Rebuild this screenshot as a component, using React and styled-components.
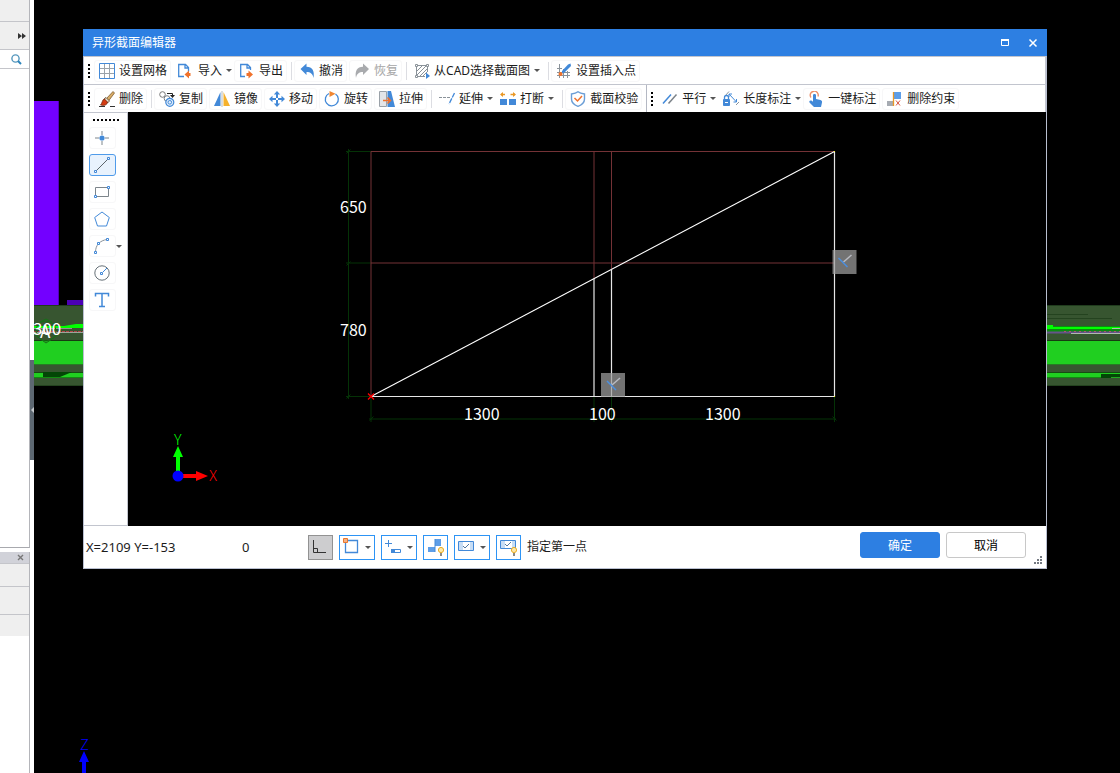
import { useState } from "react";
import styled, { createGlobalStyle, css } from "styled-components";

const GlobalStyle = createGlobalStyle`
  * {
    box-sizing: border-box;
  }

  body {
    margin: 0;
    background: #000;
    color: #1c1c1c;
    font-family: "Noto Sans", "Noto Sans CJK SC", sans-serif;
    font-size: 12px;
    line-height: 16px;
  }

  button {
    margin: 0;
    color: inherit;
    font: inherit;
  }

  svg {
    display: block;
    flex: none;
  }
`;

const Page = styled.div`
  display: flex;
  min-height: 100vh;
`;

/* ---------- docked side panels ---------- */

const Sidebar = styled.aside`
  display: flex;
  flex: none;
  flex-direction: column;
  gap: 4px;
  width: 30px;
  background: #fff;
`;

const DockPanel = styled.section`
  flex: ${({ $grow }) => ($grow ? "1" : "0 0 221px")};
  border-right: 1px solid #b4b5ba;
  border-bottom: ${({ $grow }) => ($grow ? "1px solid #a8a9ae" : "none")};
  background: #fff;
`;

const DockRow = styled.div`
  display: flex;
  align-items: center;
  justify-content: flex-end;
  height: ${({ $height }) => $height}px;
  padding-right: ${({ $pad }) => $pad || 0}px;
  border-bottom: ${({ $open }) => ($open ? "none" : "1px solid #c4c5ca")};
  background: ${({ $color }) => $color || "#efefef"};
`;

const PlainButton = styled.button`
  display: flex;
  padding: 0;
  border: 0;
  background: none;
`;

const Splitter = styled.div`
  flex: none;
  width: 4px;
  padding-top: 360px;
  background: #fff;
`;

const SplitterHandle = styled.button`
  display: flex;
  align-items: center;
  width: 4px;
  height: 100px;
  padding: 0;
  border: 0;
  background: #5d6872;
`;

/* ---------- model view behind the dialog ---------- */

const Viewport = styled.main`
  position: relative;
  flex: 1;
  min-width: 0;
  padding: 29px 73px 0 49px;
  overflow: hidden;
  background: #000;
`;

const Scene = styled.svg`
  position: absolute;
  inset: 0;
  width: 100%;
  height: 100%;
`;

const cadFont = css`
  font-family: "Noto Sans CJK SC", sans-serif;
`;

const SceneText = styled.text`
  ${cadFont}
  font-size: ${({ $size }) => $size || 16}px;
  fill: #fff;
`;

const AxisText = styled.text`
  ${cadFont}
  font-size: 15px;
  font-weight: 300;
  fill: ${({ $color }) => $color};
`;

/* ---------- dialog ---------- */

const Dialog = styled.section`
  position: relative;
  border: 1px solid #b9bfd0;
  border-top: 0;
  background: #fff;
`;

const TitleBar = styled.header`
  display: flex;
  align-items: center;
  height: 27px;
  margin: 0 -1px;
  padding: 0 9px;
  background: #2d7fe2;
  color: #fff;
`;

const Title = styled.h1`
  flex: 1;
  margin: 0;
  font-size: 12px;
  font-weight: 400;
`;

const WindowButtons = styled.div`
  display: flex;
  gap: 18px;
`;

const ToolbarRow = styled.div`
  display: flex;
  height: 28px;
  border-top: 1px solid #c2c5ce;
  border-right: 1px solid #c2c5ce;
`;

const Toolbar = styled.div`
  display: flex;
  align-items: center;
  gap: 2px;
  padding: 0 4px;

  & + & {
    border-left: 1px solid #b4b8c3;
  }
`;

const Grip = styled.span`
  width: ${({ $wide }) => ($wide ? "26px" : "2px")};
  height: ${({ $wide }) => ($wide ? "2px" : "14px")};
  margin-right: 2px;
  background: repeating-linear-gradient(
    ${({ $wide }) => ($wide ? "to right" : "to bottom")},
    #000 0 2px,
    transparent 2px 4px
  );
`;

const ToolButton = styled.button`
  display: flex;
  align-items: center;
  gap: 4px;
  height: 22px;
  padding: 0 ${({ $drop }) => ($drop ? 0 : 3)}px 0 4px;
  border: 1px solid ${({ $drop }) => ($drop ? "transparent" : "#f7f7f8")};
  border-right-width: ${({ $drop }) => ($drop ? 0 : 1)}px;
  border-radius: 3px;
  background: #fff;
  white-space: nowrap;

  &:disabled {
    color: #a6a6a6;
  }
`;

const Caret = styled.span`
  border: 3px solid transparent;
  border-top-color: #555;
  border-bottom: 0;
`;

const Separator = styled.span`
  width: 1px;
  height: 18px;
  margin-left: ${({ $afterDrop }) => ($afterDrop ? 6 : 2)}px;
  background: #dcdde2;
`;

const Workspace = styled.div`
  display: flex;
`;

const Palette = styled.div`
  display: flex;
  flex: none;
  flex-direction: column;
  width: 44px;
  padding: 6px 0 0 5px;
  border: solid #c2c5ce;
  border-width: 1px 1px 1px 0;
`;

const PaletteGrip = styled(Grip)`
  margin: 0 0 6px 4px;
`;

const PaletteRow = styled.div`
  display: flex;
  align-items: center;
  height: 22px;
  margin-bottom: 5px;
`;

const PaletteButton = styled.button`
  display: flex;
  align-items: center;
  justify-content: center;
  width: 27px;
  height: 22px;
  padding: 0 2px 0 0;
  border: 1px solid ${({ $active }) => ($active ? "#4f9bea" : "#f7f7f8")};
  border-radius: 3px;
  background: ${({ $active }) => ($active ? "#e8f2fd" : "#fff")};
`;

const Canvas = styled.div`
  flex: 1;
  min-width: 0;
  height: 414px;
  background: #000;
`;

const CanvasSvg = styled.svg`
  width: 100%;
  height: 100%;
`;

const StatusBar = styled.footer`
  display: flex;
  align-items: center;
  height: 42px;
  padding: 0 20px 0 2px;
`;

const Coords = styled.output`
  width: 156px;
  font-size: 13px;
`;

const Angle = styled.output`
  width: 66px;
  font-size: 13px;
`;

const SnapTools = styled.div`
  display: flex;
  flex: 1;
  align-items: center;
  gap: 6px;
`;

const SnapButton = styled.button`
  display: flex;
  align-items: center;
  justify-content: space-between;
  width: ${({ $drop }) => ($drop ? 36 : 25)}px;
  height: 25px;
  padding: 0 ${({ $drop }) => ($drop ? 3 : 2)}px 0 3px;
  border: 1px solid ${({ $pressed }) => ($pressed ? "#929292" : "#2d94f5")};
  background: ${({ $pressed }) => ($pressed ? "#cdcdcf" : "#fff")};
`;

const Actions = styled.div`
  display: flex;
  align-self: flex-start;
  gap: 6px;
  padding-top: 6px;
`;

const ActionButton = styled.button`
  width: 80px;
  height: 26px;
  padding: 1px 0 0;
  border: 1px solid ${({ $primary }) => ($primary ? "#2d7fe2" : "#c8c8c8")};
  border-radius: 3px;
  background: ${({ $primary }) => ($primary ? "#2d7fe2" : "#fff")};
  color: ${({ $primary }) => ($primary ? "#fff" : "#000")};
`;

const ResizeGrip = styled.svg`
  position: absolute;
  right: 4px;
  bottom: 4px;
`;

/* ---------- icons ---------- */

const BLUE = "#4289d8";
const GRAY = "#8a9299";

const icons = {
  grid: (
    <g fill="none">
      <path d="M1 5.5h14M1 10.5h14M5.5 1v14M10.5 1v14" stroke="#9aa2a9" />
      <path d="M.5.5h15v15H.5z" stroke={BLUE} />
    </g>
  ),
  import: (
    <>
      <path d="M6 13.5H.7v-12h6.8l3 3v4M7 1.5V5h3.5" fill="none" stroke={BLUE} strokeWidth="1.3" />
      <path d="M6.5 11.5l4.5-4V10h1.500v3H11v2.500z" fill="#f0722c" />
    </>
  ),
  export: (
    <>
      <path d="M6 13.5H1.700v-12h6.800l3 3V7M8 1.500V5h3.500" fill="none" stroke={BLUE} strokeWidth="1.3" />
      <path d="M14 11.500l-4.500-4V10h-2v3h2v2.500z" fill="#f0722c" />
    </>
  ),
  undo: (
    <path d="M1.500 6l6-5.500v3.200c6 0 8.300 4.300 7 11.300-.7-4.200-3-6-7-6v3z" fill={BLUE} />
  ),
  redo: (
    <path d="M15 6L9 .5v3.200c-6 0-8.300 4.300-7 11.300.7-4.200 3-6 7-6v3z" fill="#a9abae" />
  ),
  cad: (
    <g fill="none" stroke={GRAY}>
      <path d="M2 2.500h12M2 13.500h9M2.500 3v10M13.500 3v6" />
      <path d="M3 8l5-5M3 12l9-9M6 13l7-7M9 13l4-4" />
      <path d="M1.500 1.500h2v2h-2zM12.500 1.500h2v2h-2zM1.500 12.500h2v2h-2z" fill="#fff" />
      <path d="M12 9.500l4 3.500-4 3z" fill={BLUE} stroke="none" />
    </g>
  ),
  insert: (
    <>
      <path d="M3.500 1v14M7.500 6v9M1 5.500h5M1 12.500h13M1 9.500h13M11.500 8v7" fill="none" stroke={GRAY} />
      <path d="M6 8l6-6.500 2.500-1 .5 2.500-6.500 6.500-2.500 1z" fill={BLUE} />
      <circle cx="4.500" cy="11" r="2" fill="#f0722c" />
    </>
  ),
  brush: (
    <>
      <path d="M0 15.500h6M11 15.500h5" stroke="#333" />
      <path d="M7 8l7-7.500 1.500 1.500L9.500 10z" fill="#d9ad68" stroke="#6d4a1e" strokeWidth=".7" />
      <path d="M5 8l2-1.500L10.500 10l-2 2z" fill="#eee4cf" stroke="#4d3820" strokeWidth=".8" />
      <path d="M5.500 8C3 8.500 3.500 12 1.500 14c3.500 1 7 0 7-3z" fill="#d43b11" stroke="#62240f" strokeWidth=".7" />
    </>
  ),
  copy: (
    <g fill="none">
      <circle cx="3.500" cy="3.500" r="2.800" stroke="#777" />
      <path d="M8 2.500h5.500V5" stroke="#222" />
      <path d="M11 4h5l-2.500 3z" fill="#222" />
      <circle cx="8" cy="7.500" r="2.800" stroke="#798087" />
      <circle cx="10.800" cy="11.300" r="4" stroke={BLUE} fill="#e3effb" strokeWidth="1.200" />
      <circle cx="10.800" cy="11.300" r="1.800" stroke={BLUE} />
    </g>
  ),
  mirror: (
    <>
      <path d="M6.500 1v14H0z" fill={BLUE} />
      <path d="M9.500 1v14H16z" fill="#f5b12d" />
      <path d="M8 0v16" stroke="#b5bbc1" />
    </>
  ),
  move: (
    <>
      <path d="M8 0l3.200 3.500H4.800zM8 16l3.200-3.500H4.800zM0 8l3.500-3.200v6.400zM16 8l-3.500-3.200v6.400z" fill={BLUE} />
      <path d="M8 3v4M8 9v4M3 8h4M9 8h4" stroke={BLUE} strokeWidth="2" />
    </>
  ),
  rotate: (
    <>
      <path d="M5 2.500A6.500 6.500 0 1 0 11.500 3" fill="none" stroke={BLUE} strokeWidth="1.300" />
      <path d="M5.500 0l6 2.700-6 3.300z" fill="#f08732" />
    </>
  ),
  stretch: (
    <>
      <path d="M.5.5h7v15h-7z" fill="#e3e5e8" stroke="#9aa1a8" />
      <path d="M8.500 0H12l4 16H8.500z" fill={BLUE} />
      <path d="M4 9.500h7M8.500 6.500l3 3-3 3" fill="none" stroke="#f0722c" strokeWidth="1.500" />
    </>
  ),
  extend: (
    <>
      <path d="M0 6.500h11" stroke={GRAY} strokeDasharray="3 1" />
      <path d="M15.500 2L10 13" stroke={BLUE} strokeWidth="1.300" strokeDasharray="5 1" />
    </>
  ),
  breakTool: (
    <>
      <path d="M0 8h7v6H0zM9 8h7v6H9z" fill={BLUE} />
      <path d="M1 3.500h4M10.500 3.500H15" stroke="#e99826" strokeWidth="1.300" />
      <path d="M3 1v5L0 3.500zM13 1v5l3-2.500z" fill="#e99826" />
    </>
  ),
  check: (
    <g fill="none">
      <path d="M8 .8c2 1.700 4 2 6.500 2.200v5c0 4-3 6-6.500 7.300C4.500 14 1.500 12 1.500 8V3C4 2.800 6 2.500 8 .8z" stroke="#6b9ed6" strokeWidth="1.400" />
      <path d="M4.500 7l3 3 4.500-5" stroke="#f0722c" strokeWidth="1.500" />
    </g>
  ),
  parallel: (
    <g fill="none" strokeWidth="1.500">
      <path d="M1 12.500l8-9" stroke={BLUE} />
      <path d="M6.500 12.500l8-9" stroke="#7b8288" />
    </g>
  ),
  length: (
    <g fill="none">
      <path d="M2 5l4-4.500M13 14l3-3" stroke={GRAY} />
      <path d="M6 3l7.500 8M6 6V3h3M10.500 11h3V8" stroke={BLUE} />
      <path d="M.5 8.500h6v6h-6z" fill={BLUE} stroke={BLUE} />
      <path d="M1.500 8V6.500a2 2 0 0 1 4 0V8" stroke={BLUE} strokeWidth="1.300" />
      <path d="M2 11.500h3" stroke="#fff" />
    </g>
  ),
  touch: (
    <>
      <path d="M3 6.500A4 4 0 1 1 10 5.500" fill="none" stroke="#ee9068" strokeWidth="1.400" />
      <path d="M5 4c0-1.500 3-1.500 3 0v4l4.500 1c1.300.4 1.800 1.200 1.500 2.500L13 16H6l-4.500-4.500C.7 9.700 2.500 8.800 3.800 9.800L5 10.800z" fill={BLUE} />
    </>
  ),
  unlink: (
    <>
      <path d="M0 10h6v5H0z" fill="#a6abb2" />
      <path d="M7 1h7v7H7z" fill="#5d9ee8" />
      <path d="M6.500 1v14" stroke="#e99826" strokeWidth="1.300" />
      <path d="M9 9.500l4 5M13 9.500l-4 5" stroke="#d85540" />
    </>
  ),
  point: (
    <>
      <path d="M8 1v4M8 11v4M1 8h4M11 8h4" stroke="#7d858b" />
      <circle cx="8" cy="8" r="2.600" fill={BLUE} />
    </>
  ),
  line: (
    <>
      <path d="M2 14L14 2" stroke="#5c646b" />
      <path d="M.5 13.500h2v2h-2zM13.500.5h2v2h-2z" fill="#fff" stroke={BLUE} />
    </>
  ),
  rect: (
    <>
      <path d="M1.500 3.500h13v9h-13z" fill="none" stroke="#7d858b" />
      <path d="M.5 11.500h2v2h-2zM13.500 2.500h2v2h-2z" fill="#fff" stroke={BLUE} />
    </>
  ),
  polygon: <path d="M8 1l7.300 5.500-2.800 8.500h-9L.7 6.500z" fill="none" stroke={BLUE} />,
  arc: (
    <>
      <path d="M1.500 14C1.500 7 6 2.500 13 1.500" fill="none" stroke="#8a9299" />
      <path d="M.5 13.500h2v2h-2zM3.500 4.500h2v2h-2zM12.500.5h2v2h-2z" fill="#fff" stroke={BLUE} />
    </>
  ),
  circle: (
    <>
      <circle cx="8" cy="8" r="7.200" fill="none" stroke="#667077" />
      <path d="M9 7l4-4" stroke={BLUE} />
      <path d="M6.500 7.500h2v2h-2z" fill="#fff" stroke={BLUE} />
    </>
  ),
  textTool: (
    <path d="M1.500 4.500v-3h13v3M8 1.500v13M5 14.500h6" fill="none" stroke={BLUE} strokeWidth="1.500" />
  ),
};

const Icon = ({ name }) => (
  <svg width="16" height="16" viewBox="0 0 16 16" aria-hidden="true">
    {icons[name]}
  </svg>
);

const bulb = (
  <>
    <circle cx="14" cy="12" r="2.600" fill="#ffe9a8" stroke="#e9ad24" />
    <path d="M13 15h2v3h-2z" fill="#8c8a84" />
  </>
);

const snapIcons = {
  ortho: <path d="M1.500 2v12.500H14M1.500 10.500h4v4" fill="none" stroke="#333" />,
  corner: (
    <>
      <path d="M2.500 2.500h12v12h-12z" fill="none" stroke={BLUE} strokeWidth="1.300" />
      <path d="M.5.5h4v4h-4z" fill="#f6b183" stroke="#e8772e" />
    </>
  ),
  input: (
    <>
      <path d="M3.500 2v7M0 5.500h7" stroke={BLUE} />
      <path d="M6.500 11.500h9v3h-9z" fill="#fff" stroke={BLUE} />
      <path d="M6 11h4v4H6z" fill={BLUE} />
    </>
  ),
  blocks: (
    <>
      <path d="M8 1h6v7H8zM1 9h7v5H1z" fill="#5d9ee8" />
      <path d="M8 1v13" stroke={BLUE} />
      {bulb}
    </>
  ),
  constraint: (
    <>
      <path d="M.5 3.500h15v9H.5z" fill="#fff" stroke={BLUE} />
      <path d="M1 4h4v8H1zM12 4h3v8h-3z" fill="#c7ddf5" />
      <path d="M5 8l2 2 4-4" fill="none" stroke="#52779f" />
    </>
  ),
  constraintLight: (
    <>
      <path d="M.5 2.500h15v8H.5z" fill="#fff" stroke={BLUE} />
      <path d="M1 3h4v7H1zM12 3h3v7h-3z" fill="#c7ddf5" />
      <path d="M5 6l2 2 4-4" fill="none" stroke="#52779f" />
      {bulb}
    </>
  ),
};

/* ---------- data ---------- */

const mainTools = [
  { icon: "grid", label: "设置网格" },
  { icon: "import", label: "导入", drop: true },
  { icon: "export", label: "导出" },
  { separator: true },
  { icon: "undo", label: "撤消" },
  { icon: "redo", label: "恢复", disabled: true },
  { separator: true },
  { icon: "cad", label: "从CAD选择截面图", drop: true },
  { separator: true },
  { icon: "insert", label: "设置插入点" },
];

const editTools = [
  { icon: "brush", label: "删除" },
  { separator: true },
  { icon: "copy", label: "复制" },
  { icon: "mirror", label: "镜像" },
  { icon: "move", label: "移动" },
  { icon: "rotate", label: "旋转" },
  { icon: "stretch", label: "拉伸" },
  { separator: true },
  { icon: "extend", label: "延伸", drop: true },
  { icon: "breakTool", label: "打断", drop: true },
  { separator: true },
  { icon: "check", label: "截面校验" },
];

const constraintTools = [
  { icon: "parallel", label: "平行", drop: true },
  { icon: "length", label: "长度标注", drop: true },
  { icon: "touch", label: "一键标注" },
  { icon: "unlink", label: "删除约束" },
];

const drawTools = [
  { icon: "point", label: "点" },
  { icon: "line", label: "直线" },
  { icon: "rect", label: "矩形" },
  { icon: "polygon", label: "多边形" },
  { icon: "arc", label: "弧", drop: true },
  { icon: "circle", label: "圆" },
  { icon: "textTool", label: "文字" },
];

const snapTools = [
  { icon: "ortho", label: "正交", pressed: true },
  { icon: "corner", label: "对象捕捉", drop: true },
  { icon: "input", label: "动态输入", drop: true },
  { icon: "blocks", label: "显示图块" },
  { icon: "constraint", label: "约束", drop: true },
  { icon: "constraintLight", label: "显示约束" },
];

const ToolGroup = ({ label, tools }) => (
  <Toolbar role="toolbar" aria-label={label}>
    <Grip />
    {tools.map((tool, index) =>
      tool.separator ? (
        <Separator key={index} $afterDrop={tools[index - 1].drop} />
      ) : (
        <ToolButton key={index} type="button" $drop={tool.drop} disabled={tool.disabled}>
          <Icon name={tool.icon} />
          {tool.label}
          {tool.drop && <Caret />}
        </ToolButton>
      )
    )}
  </Toolbar>
);

const ConstraintMark = ({ x, y }) => (
  <g transform={`translate(${x} ${y})`}>
    <path d="M0 0h24v24H0z" fill="#a0a0a0" fillOpacity=".72" />
    <path d="M11 12l8-7" stroke="#b9bbc2" strokeWidth="1.500" />
    <path d="M6 8l9 9" stroke="#4b8fe0" strokeWidth="1.500" />
  </g>
);

const SectionDrawing = () => (
  <CanvasSvg role="img" aria-label="截面图">
    <g transform="translate(-128 -112)" fill="none">
      <path
        d="M348.500 149v250M346 151.500h25M346 263h25M346 396.500h25M369 419h467M371 397v25M594 397v25M611.500 397v25M834.500 397v25"
        stroke="#043206"
      />
      <path
        d="M346.500 153.500l4-4M346.500 265.500l4-4M346.500 398.500l4-4M369.500 420.500l4-4M832.500 416.500l4 4"
        stroke="#043206"
      />
      <path
        d="M371 396V151.500h463M371 263h463M594 151v128M611.500 151v118"
        stroke="#743236"
      />
      <path d="M371 396.500L834.500 151.500" stroke="#fff" strokeWidth="1.100" />
      <path d="M371 396.500h463.500v-245M594 396V279M611.500 396V269" stroke="#e6e6e6" strokeWidth="1.200" />
      <path d="M368 393.500l6 6M374 393.500l-6 6" stroke="#f00" strokeWidth="1.300" />
      <path d="M834 151h1v1h-1zM834 396h1v1h-1z" fill="#ff3" />
    </g>
    <g transform="translate(-128 -112)">
      <SceneText x="340" y="213">650</SceneText>
      <SceneText x="340" y="336">780</SceneText>
      <SceneText x="464" y="420">1300</SceneText>
      <SceneText x="589" y="420">100</SceneText>
      <SceneText x="705" y="420">1300</SceneText>
      <ConstraintMark x={832.5} y={250} />
      <ConstraintMark x={601} y={373} />
      <path d="M176 474V457h-3l5-11 5 11h-3v17z" fill="#0f0" />
      <path d="M180 474h16v-3l12 5-12 5v-3h-16z" fill="#f00" />
      <circle cx="178" cy="476" r="5.500" fill="#00f" />
      <AxisText x="174" y="445" $color="#0f0">Y</AxisText>
      <AxisText x="209" y="481" $color="#f00">X</AxisText>
    </g>
  </CanvasSvg>
);

const ModelScene = () => (
  <Scene role="img" aria-label="模型视图">
    <path d="M0 101h25v204H0z" fill="#7300ff" />
    <path d="M24.500 101v204" stroke="#5200b8" />
    <path d="M33 300h17v5H33z" fill="#4b00b5" />
    <rect y="305" width="100%" height="81" fill="#375530" />
    <rect y="305" width="100%" height="1" fill="#203c1d" />
    <rect y="340" width="100%" height="1" fill="#163d11" />
    <rect y="341" width="100%" height="23" fill="#20cf20" />
    <rect y="364" width="100%" height="1" fill="#267b23" />
    <rect y="372" width="100%" height="1" fill="#154c11" />
    <rect y="373" width="100%" height="5" fill="#20cf20" />
    <rect y="377" width="100%" height="1" fill="#128a12" />
    <rect y="385" width="100%" height="1" fill="#24431f" />
    <g>
      <path d="M0 326h30l12-2h8v4H0z" fill="#0f0" />
      <path d="M0 328.500h38" stroke="#998c91" />
      <path d="M0 331.500h50" stroke="#b4434a" strokeDasharray="3 1" />
      <path d="M0 332.500h50" stroke="#9aa69a" />
      <path d="M9 372h29l-12 5H9z" fill="#034606" />
      <path d="M1 335l11 8 12-8M6 322l6-3 6 3" fill="none" stroke="#176f17" />
      <circle cx="12" cy="331" r="10" fill="none" stroke="#176f17" />
      <SceneText x="-1" y="335" $size={17}>300</SceneText>
      <SceneText x="6" y="338" $size={17}>A</SceneText>
    </g>
    <g>
      <path d="M1013 314.500h41M1013 318.500h65" stroke="#24431f" />
      <path d="M1013 325h6v1h67v7h-73z" fill="#0c8b11" />
      <path d="M1013 325h6v2h67v2h-73z" fill="#0f0" />
      <path d="M1013 332.500h73" stroke="#665489" strokeWidth="2" />
      <path d="M1037 333.500h49M1078 328.500h8" stroke="#b1b9b1" />
      <path d="M1030 331.500h56" stroke="#b54b74" strokeDasharray="2 3" />
      <path d="M1067 374h19v4h-19z" fill="#034606" />
      <path d="M1077 377.500h9" stroke="#21aa21" />
    </g>
    <path d="M48 773v-11h-3l5-11 5 11h-3v11z" fill="#00f" />
    <AxisText x="46" y="750" $color="#00f">Z</AxisText>
  </Scene>
);

const App = () => {
  const [activeTool, setActiveTool] = useState("line");

  return (
    <>
      <GlobalStyle />
      <Page>
        <Sidebar>
          <DockPanel $grow>
            <DockRow $height={22} />
            <DockRow $height={28} $pad={3}>
              <PlainButton type="button" aria-label="展开">
                <svg width="8" height="6" aria-hidden="true">
                  <path d="M0 0l4 3-4 3zM4 0l4 3-4 3z" fill="#333" />
                </svg>
              </PlainButton>
            </DockRow>
            <DockRow $height={19} $pad={7} $color="#fff">
              <PlainButton type="button" aria-label="搜索">
                <svg width="11" height="11" fill="none" aria-hidden="true">
                  <circle cx="4.500" cy="4.500" r="3.600" stroke="#5597bd" strokeWidth="1.400" />
                  <path d="M7 7l3 3" stroke="#2c84bb" strokeWidth="2" />
                </svg>
              </PlainButton>
            </DockRow>
          </DockPanel>
          <DockPanel>
            <DockRow $height={12} $pad={5} $color="#d1d2d9">
              <PlainButton type="button" aria-label="关闭面板">
                <svg width="7" height="7" aria-hidden="true">
                  <path d="M1 1l5 5M6 1L1 6" stroke="#777" strokeWidth="1.400" />
                </svg>
              </PlainButton>
            </DockRow>
            <DockRow $height={23} />
            <DockRow $height={28} />
            <DockRow $height={21} $open />
          </DockPanel>
        </Sidebar>

        <Splitter>
          <SplitterHandle type="button" aria-label="折叠侧栏">
            <svg width="4" height="6" aria-hidden="true">
              <path d="M4 0v6L1 3z" fill="#c5c9cd" />
            </svg>
          </SplitterHandle>
        </Splitter>

        <Viewport>
          <ModelScene />
          <Dialog role="dialog" aria-labelledby="editor-title">
            <TitleBar>
              <Title id="editor-title">异形截面编辑器</Title>
              <WindowButtons>
                <PlainButton type="button" aria-label="最大化">
                  <svg width="10" height="10" aria-hidden="true">
                    <path d="M1.500 2v5.500h7V2M1 2h8" fill="none" stroke="#fff" />
                    <path d="M1 1h8v2H1z" fill="#fff" />
                  </svg>
                </PlainButton>
                <PlainButton type="button" aria-label="关闭">
                  <svg width="10" height="10" aria-hidden="true">
                    <path d="M1.500 1.500l7 7M8.500 1.500l-7 7" stroke="#fff" strokeWidth="1.500" />
                  </svg>
                </PlainButton>
              </WindowButtons>
            </TitleBar>

            <ToolbarRow>
              <ToolGroup label="常用" tools={mainTools} />
            </ToolbarRow>
            <ToolbarRow>
              <ToolGroup label="编辑" tools={editTools} />
              <ToolGroup label="约束" tools={constraintTools} />
            </ToolbarRow>

            <Workspace>
              <Palette role="toolbar" aria-label="绘图">
                <PaletteGrip $wide />
                {drawTools.map((tool) => (
                  <PaletteRow key={tool.icon}>
                    <PaletteButton
                      type="button"
                      aria-label={tool.label}
                      $active={activeTool === tool.icon}
                      onClick={() => setActiveTool(tool.icon)}
                    >
                      <Icon name={tool.icon} />
                    </PaletteButton>
                    {tool.drop && <Caret />}
                  </PaletteRow>
                ))}
              </Palette>
              <Canvas>
                <SectionDrawing />
              </Canvas>
            </Workspace>

            <StatusBar>
              <Coords>X=2109 Y=-153</Coords>
              <Angle>0</Angle>
              <SnapTools>
                {snapTools.map((tool) => (
                  <SnapButton
                    key={tool.icon}
                    type="button"
                    aria-label={tool.label}
                    $drop={tool.drop}
                    $pressed={tool.pressed}
                  >
                    <svg width="18" height="18" aria-hidden="true">
                      {snapIcons[tool.icon]}
                    </svg>
                    {tool.drop && <Caret />}
                  </SnapButton>
                ))}
                <span>指定第一点</span>
              </SnapTools>
              <Actions>
                <ActionButton type="button" $primary>确定</ActionButton>
                <ActionButton type="button">取消</ActionButton>
              </Actions>
            </StatusBar>
            <ResizeGrip width="8" height="8" aria-hidden="true">
              <path d="M6 0h2v2H6zM3 3h2v2H3zM6 3h2v2H6zM0 6h2v2H0zM3 6h2v2H3zM6 6h2v2H6z" fill="#747982" />
            </ResizeGrip>
          </Dialog>
        </Viewport>
      </Page>
    </>
  );
};

export default App;
